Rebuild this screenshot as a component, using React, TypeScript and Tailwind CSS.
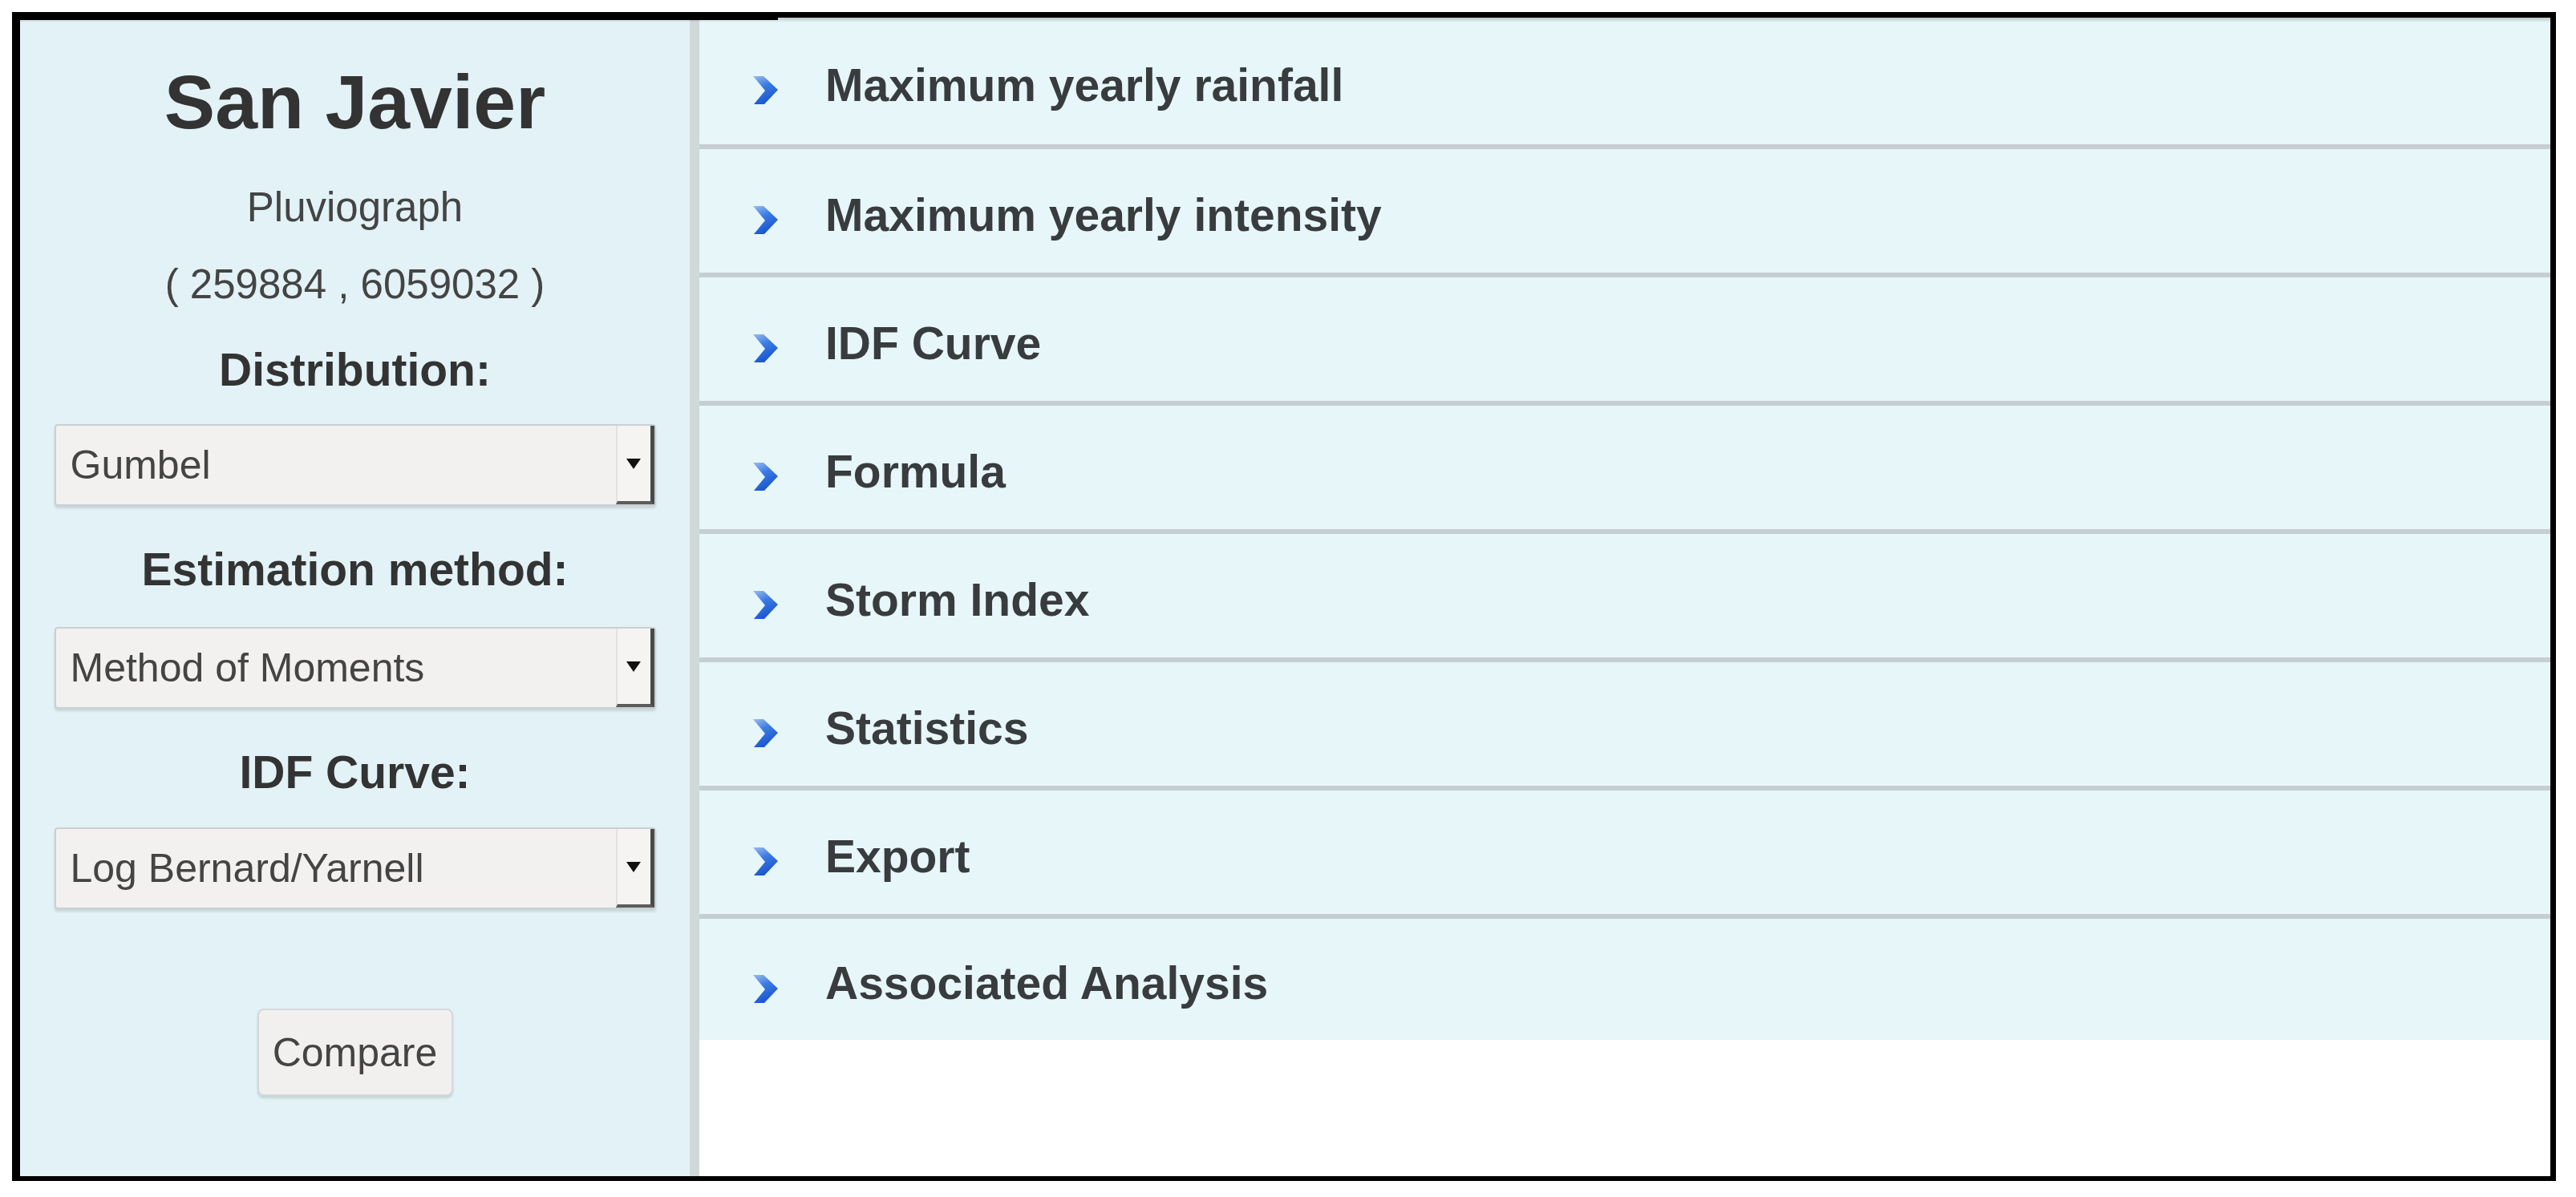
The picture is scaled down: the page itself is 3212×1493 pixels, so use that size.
import React from 'react';

const sections = [
  'Maximum yearly rainfall',
  'Maximum yearly intensity',
  'IDF Curve',
  'Formula',
  'Storm Index',
  'Statistics',
  'Export',
  'Associated Analysis',
];

const Chevron = () => (
  <svg width="38" height="40" viewBox="0 0 38 40" className="mt-[12px] shrink-0">
    <defs>
      <linearGradient id="chev" x1="0" y1="0" x2="0.4" y2="1">
        <stop offset="0%" stopColor="#9cbcf0" />
        <stop offset="45%" stopColor="#3b7be3" />
        <stop offset="100%" stopColor="#1a56cf" />
      </linearGradient>
    </defs>
    <path d="M4 3 L17 3 L35 20 L18 38 L5 38 L19 21 Z" fill="url(#chev)" />
  </svg>
);

const Select = ({ value, className = '' }: { value: string; className?: string }) => (
  <div
    className={`mx-auto flex h-[102px] w-[750px] items-stretch rounded-[4px] border-2 border-[#c9d0d2] bg-[#f2f1f0] shadow-[0_3px_3px_rgba(0,0,0,0.12)] ${className}`}
  >
    <div className="flex flex-1 items-center pl-[18px] text-[50px] leading-none text-[#444]">{value}</div>
    <div className="flex w-[48px] items-center justify-center border-l-2 border-r-[5px] border-b-[4px] border-l-[#e2e1df] border-r-[#4a4a4a] border-b-[#5c5c5c] bg-[#f5f4f3]">
      <svg width="20" height="15" viewBox="0 0 20 15">
        <path d="M1 1 L19 1 L10 14 Z" fill="#111" />
      </svg>
    </div>
  </div>
);

const Label = ({ children, className = '' }: { children: React.ReactNode; className?: string }) => (
  <div className={`h-[57px] text-center text-[57px] font-bold leading-none text-[#333] ${className}`}>{children}</div>
);

export default function App() {
  return (
    <div className="min-h-screen bg-white pl-[15px] pt-[15px] font-['Liberation_Sans',Arial,sans-serif]">
      <div className="relative h-[1458px] w-[3172px] border-b-[6px] border-l-[10px] border-r-[7px] border-t-[7px] border-black">
        <div className="flex h-full">
          {/* sidebar */}
          <div className="flex w-[835px] flex-col bg-[#e2f2f6] pt-[58px]">
            <h1 className="h-[95px] text-center text-[95px] font-bold leading-none text-[#333]">San Javier</h1>
            <div className="mt-[58px] h-[51px] text-center text-[51px] leading-none text-[#444]">Pluviograph</div>
            <div className="mt-[45px] h-[51px] text-center text-[51px] leading-none text-[#444]">( 259884 , 6059032 )</div>
            <Label className="mt-[53px]">Distribution:</Label>
            <Select value="Gumbel" className="mt-[39px]" />
            <Label className="mt-[51px]">Estimation method:</Label>
            <Select value="Method of Moments" className="mt-[43px]" />
            <Label className="mt-[51px]">IDF Curve:</Label>
            <Select value="Log Bernard/Yarnell" className="mt-[40px]" />
            <button className="mx-auto mt-[124px] h-[109px] w-[244px] rounded-[8px] border-2 border-[#d3d8da] bg-[#f1f0ef] text-[50px] leading-none text-[#444] shadow-[0_3px_3px_rgba(0,0,0,0.12)]">
              Compare
            </button>
          </div>

          {/* divider */}
          <div className="w-[12px] bg-[#d1d8da]" />

          {/* accordion */}
          <div className="flex flex-1 flex-col bg-white">
            {sections.map((title, i) => {
              const last = i === sections.length - 1;
              const h = i === 0 ? 'h-[164px]' : last ? 'h-[151px]' : 'h-[160px]';
              return (
                <div
                  key={title}
                  className={`flex ${h} shrink-0 items-center bg-[#e7f6f9] pl-[63px] pt-[10px] ${
                    last ? '' : 'border-b-[6px] border-[#c6ced1]'
                  }`}
                >
                  <Chevron />
                  <span className="ml-[56px] text-[57px] font-bold leading-none text-[#383c3f]">{title}</span>
                </div>
              );
            })}
          </div>
        </div>

        {/* top edge details */}
        <div className="pointer-events-none absolute left-0 right-0 top-0 h-[6px] bg-gradient-to-b from-black/20 to-transparent" />
        <div className="pointer-events-none absolute left-0 top-0 h-[3px] w-[945px] bg-black" />
      </div>
    </div>
  );
}
